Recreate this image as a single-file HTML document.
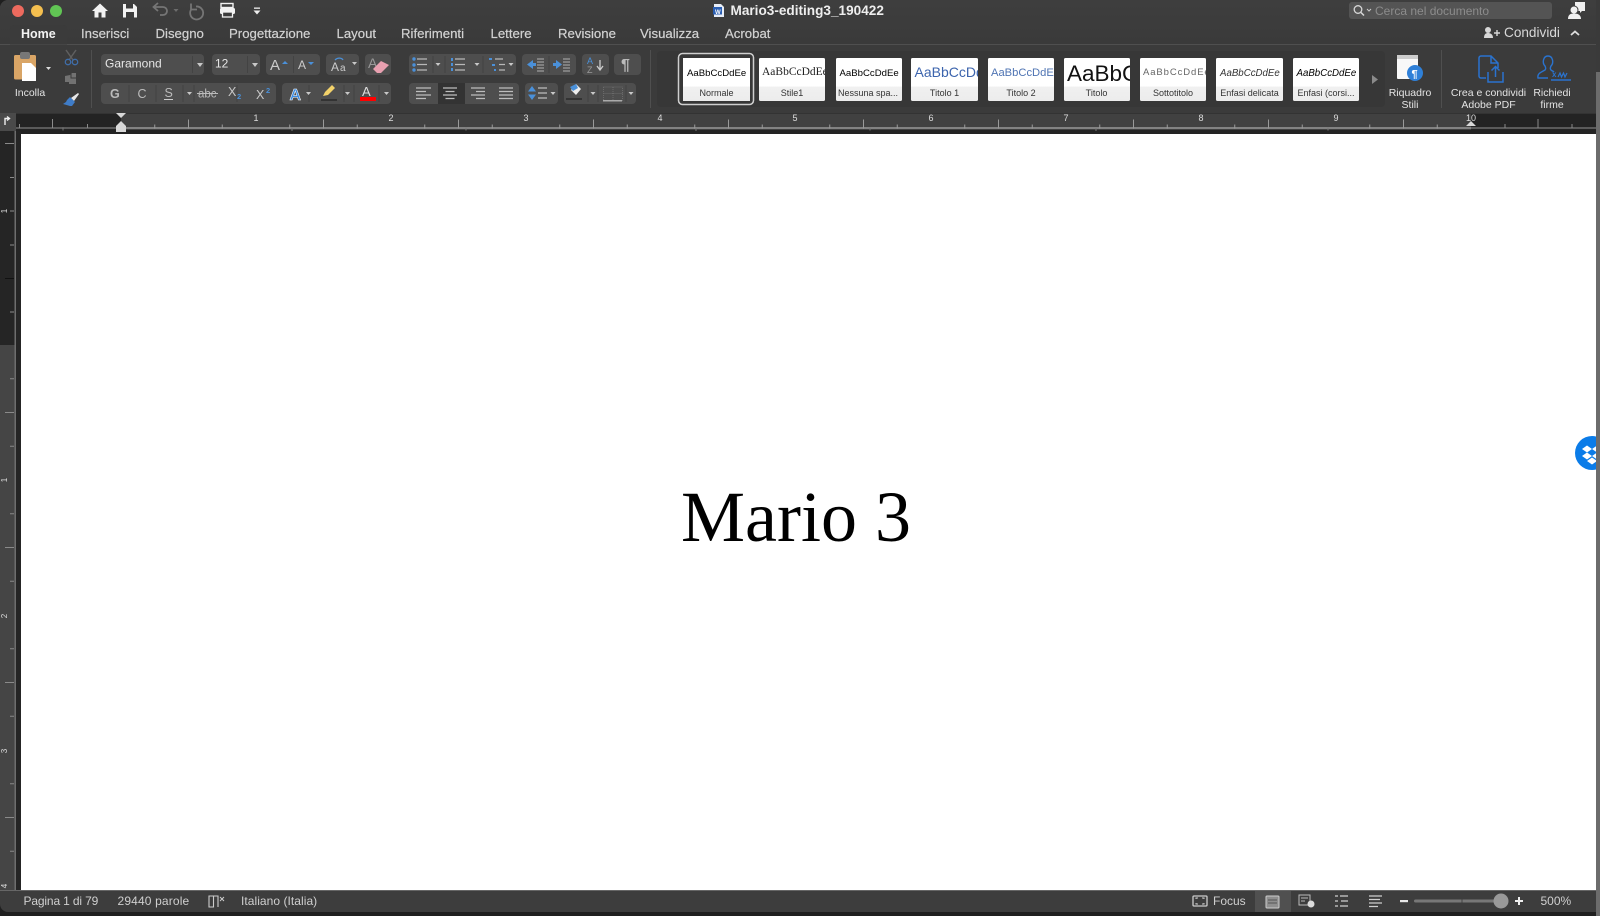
<!DOCTYPE html>
<html><head><meta charset="utf-8"><title>Mario3-editing3_190422</title>
<style>
html,body{margin:0;padding:0;background:#1f1f1f;width:1600px;height:916px;overflow:hidden}
svg{display:block;position:absolute;left:0;top:0}
svg.root{filter:blur(.3px)}
text{font-family:"Liberation Sans",sans-serif;fill:#dedede;font-size:12px}
.tab{font-size:13.2px;fill:#d2d2d2;stroke:#d2d2d2;stroke-width:.2}
.st{font-size:12px;fill:#cfcfcf}
.lb{font-size:9px;fill:#333;text-anchor:middle}
.rb{font-size:10.5px;fill:#e4e4e4;text-anchor:middle}
.n{font-size:9px;fill:#ddd;text-anchor:middle}
</style></head><body>
<svg class="root" width="1600" height="916" viewBox="0 0 1600 916" xmlns="http://www.w3.org/2000/svg">
<defs>
<linearGradient id="tb" x1="0" y1="0" x2="0" y2="1"><stop offset="0" stop-color="#3e3e3e"/><stop offset="1" stop-color="#3a3a3a"/></linearGradient>
<linearGradient id="card" x1="0" y1="0" x2="0" y2="1"><stop offset="0" stop-color="#fff"/><stop offset=".66" stop-color="#fff"/><stop offset=".67" stop-color="#f0f0f0"/><stop offset="1" stop-color="#ececec"/></linearGradient>
<pattern id="rt" x="121" y="113" width="135" height="18" patternUnits="userSpaceOnUse">
<path d="M33.75 11.5v4M67.5 6.5v9M101.25 11.5v4" stroke="#9a9a9a" stroke-width="1" fill="none"/></pattern>
<pattern id="vt" x="0" y="345" width="16" height="135" patternUnits="userSpaceOnUse">
<path d="M10 33.75h4M5 67.5h9M10 101.25h4" stroke="#8a8a8a" stroke-width="1" fill="none"/></pattern>
<clipPath id="win"><path d="M8 0H1596V912H8a8 8 0 0 1-8-8V8a8 8 0 0 1 8-8Z"/></clipPath>
<clipPath id="cl"><rect x="0" y="0" width="1596" height="916"/></clipPath>
</defs>
<rect width="1600" height="916" fill="#1f1f1f"/>
<rect x="1596" width="4" height="916" fill="#6c6c6c"/>
<rect x="1596" width="4" height="72" fill="#3a3a3a"/>
<g clip-path="url(#win)">
<rect width="1600" height="113" fill="#3b3b3b"/>
<rect width="1600" height="44" fill="url(#tb)"/>
<rect y="44" width="1600" height="1" fill="#4f4f4f"/>
<!-- ruler -->
<rect y="113" width="1600" height="21" fill="#232323"/>
<rect x="121" y="113" width="1350" height="17" fill="#414141"/>
<rect x="16" y="113" width="1580" height="1" fill="#333"/>
<rect x="16" y="127" width="1580" height="2" fill="#5a5a5a"/>
<rect x="121" y="127" width="1350" height="2" fill="#828282"/>
<rect x="121" y="113" width="1350" height="18" fill="url(#rt)"/>
<path d="M19.5 124v4M52.5 119v9M87.5 124v4M1505 124v4M1538 119v9M1572 124v4" stroke="#8a8a8a" fill="none"/>
<path d="M292 128v3M696 128v3M1096 128v3" stroke="#777" fill="none"/>
<path d="M63 127.5v3M466 127.5v3M870 127.5v3M1328 127.5v3" stroke="#777" fill="none"/>
<rect x="0" y="113" width="16" height="18" fill="#4a4a4a"/>
<path d="M5 125v-6.500h3.500M7 116.500l2.500 2-2.500 2" stroke="#eee" stroke-width="1.400" fill="none"/>
<text class="n" x="256" y="121">1</text><text class="n" x="391" y="121">2</text><text class="n" x="526" y="121">3</text><text class="n" x="660" y="121">4</text><text class="n" x="795" y="121">5</text><text class="n" x="931" y="121">6</text><text class="n" x="1066" y="121">7</text><text class="n" x="1201" y="121">8</text><text class="n" x="1336" y="121">9</text><text class="n" x="1471" y="121">10</text>
<path d="M116 113h10l-5 5ZM121 121l5 5h-10ZM116 126h10v6h-10ZM1466 126l5-5 5 5Z" fill="#d8d8d8"/>
<!-- vertical ruler -->
<rect x="0" y="131" width="21" height="760" fill="#252525"/>
<rect x="0" y="345" width="15" height="545" fill="#454545"/>
<rect x="14.500" y="131" width="1.500" height="760" fill="#6e6e6e"/>
<path d="M5 143.500h9M10 177.500h4M10 245h4M10 312h4" stroke="#8a8a8a" fill="none"/>
<path d="M10 211h4" stroke="#8a8a8a"/><path d="M5 278.500h9" stroke="#111"/>
<rect x="0" y="345" width="15" height="545" fill="url(#vt)"/>
<g font-size="9"><text class="n" transform="translate(8,211) rotate(-90)" y="-1" style="font-size:8px">1</text>
<text class="n" transform="translate(8,480) rotate(-90)" y="-1" style="font-size:8px">1</text>
<text class="n" transform="translate(8,616) rotate(-90)" y="-1" style="font-size:8px">2</text>
<text class="n" transform="translate(8,751) rotate(-90)" y="-1" style="font-size:8px">3</text>
<text class="n" transform="translate(8,886) rotate(-90)" y="-1" style="font-size:8px">4</text></g>
<!-- page -->
<rect x="21" y="134" width="1575" height="756" fill="#fff"/>
<text x="681" y="541" style="font-family:'Liberation Serif',serif;font-size:72px;fill:#000">Mario 3</text>
<!-- status bar -->
<rect y="890" width="1600" height="22" fill="#3d3d3d"/>
<rect y="890" width="1600" height="1" fill="#666"/>
<rect x="1255" y="891" width="36" height="21" fill="#505050"/>
</g>
<!-- traffic lights -->
<circle cx="18" cy="11" r="6" fill="#ed6a5e"/><circle cx="37" cy="11" r="6" fill="#f4bf4f"/><circle cx="56" cy="11" r="6" fill="#61c554"/>
<!-- quick access -->
<path d="M100 3.500 92 11h2.500v6.500h4v-5h3v5h4V11H108Z" fill="#f2f2f2"/>
<path d="M123 4h11l3 3v10.500h-14Z" fill="#f2f2f2"/><rect x="126" y="4" width="7" height="4.500" fill="#3c3c3c"/><rect x="126" y="12" width="8" height="5.500" fill="#3c3c3c"/>
<path d="M154 7h9a4 4 0 0 1 4 4 4 4 0 0 1-4 4h-3M158 3l-4.500 4 4.500 4" fill="none" stroke="#757575" stroke-width="1.800"/>
<path d="M173.500 9h5l-2.500 3Z" fill="#6c6c6c"/>
<path d="M196 6.500a6.500 6.500 0 1 1-4.500 2.500M191 3.500v6h6" fill="none" stroke="#757575" stroke-width="1.800"/>
<rect x="221" y="3.500" width="12" height="4" fill="none" stroke="#f2f2f2" stroke-width="1.400"/><rect x="220" y="8" width="15" height="6" rx="1.500" fill="#f2f2f2"/><rect x="222.500" y="12" width="10" height="5" fill="#3c3c3c" stroke="#f2f2f2" stroke-width="1.300"/>
<rect x="254" y="7.500" width="6" height="1.300" fill="#eee"/><path d="M253.500 10.500h7l-3.500 4Z" fill="#eee"/>
<!-- title -->
<path d="M714 4h7l3 3v10h-10Z" fill="#e8eef8"/><rect x="713" y="7" width="9" height="7.500" fill="#2b5fb3"/>
<text x="715" y="14" style="font-size:6px;fill:#fff;font-weight:bold">W</text>
<text x="730.500" y="15" style="font-size:13.6px;font-weight:bold;fill:#eee">Mario3-editing3_190422</text>
<!-- search -->
<rect x="1349" y="2" width="203" height="17" rx="3" fill="#545454"/>
<circle cx="1358" cy="9.500" r="3.800" fill="none" stroke="#d8d8d8" stroke-width="1.300"/><path d="M1361 12.500l3 3" stroke="#d8d8d8" stroke-width="1.500"/><path d="M1367 9l2 2 2-2" stroke="#ccc" stroke-width="1" fill="none"/>
<text x="1375" y="15" style="font-size:12px;fill:#8c8c8c">Cerca nel documento</text>
<!-- comments -->
<path d="M1575 2h10v9h-3l-2 2v-2h-5Z" fill="#f0f0f0"/><circle cx="1574" cy="10" r="4" fill="#f0f0f0" stroke="#3c3c3c"/><path d="M1568 19c0-4 2-5.500 6-5.500s7 1.500 7 5.500Z" fill="#f0f0f0"/>
<!-- share -->
<circle cx="1488" cy="30" r="3" fill="#d8d8d8"/><path d="M1484 38c0-4 2-5 4-5s5 1 5 5Z" fill="#d8d8d8"/><path d="M1494 33h6M1497 30v6" stroke="#d8d8d8" stroke-width="1.400"/>
<text x="1504" y="37" style="font-size:13.6px;fill:#d8d8d8">Condividi</text>
<path d="M1571 35l4-3.500 4 3.500" fill="none" stroke="#ddd" stroke-width="1.800"/>
<!-- tabs -->
<path d="M10 44.500V29a4 4 0 0 1 4-4h49a4 4 0 0 1 4 4v15.500Z" fill="#3b3b3b"/>
<text x="21" y="38" style="font-size:12.500px;font-weight:bold;fill:#f2f2f2">Home</text>
<text class="tab" x="81" y="38">Inserisci</text><text class="tab" x="155.500" y="38">Disegno</text><text class="tab" x="229" y="38">Progettazione</text><text class="tab" x="336.500" y="38">Layout</text><text class="tab" x="401" y="38">Riferimenti</text><text class="tab" x="490.500" y="38">Lettere</text><text class="tab" x="558" y="38">Revisione</text><text class="tab" x="640" y="38">Visualizza</text><text class="tab" x="725" y="38">Acrobat</text>
<!-- clipboard -->
<rect x="14" y="55" width="22" height="24.500" rx="1.500" fill="#d9a566"/><rect x="20" y="52" width="10" height="7" rx="2" fill="#777"/><path d="M22 63h9l5 5v13H22Z" fill="#fff"/>
<path d="M46 67h5l-2.500 3Z" fill="#ddd"/>
<text class="rb" x="30" y="96" style="font-size:10.500px">Incolla</text>
<path d="M66 50l7 10M76 50l-7 10" stroke="#5f5f5f" stroke-width="1.500"/><circle cx="68" cy="62" r="2.700" fill="none" stroke="#3f6da8" stroke-width="1.300"/><circle cx="75" cy="62" r="2.700" fill="none" stroke="#3f6da8" stroke-width="1.300"/>
<path d="M65 76l5-1 2-2h4v11h-7v-2h-4Z" fill="#727272"/><path d="M71 73v5h5" stroke="#3b3b3b" fill="none"/>
<path d="M79 94l-1-1-7 5 3 3Z" fill="#e8e8e8"/><path d="M70 97l5 5-3 4h-2l-7-2 3-2 1-2Z" fill="#3f7cc7"/>
<path d="M91.500 50v58M650.500 50v58M1441.500 50v58" stroke="#4f4f4f"/>
<!-- ribbon boxes -->
<g fill="#4e4e4e">
<rect x="101" y="54" width="103" height="21" rx="4"/><rect x="212" y="54" width="48" height="21" rx="4"/><rect x="266" y="54" width="54" height="21" rx="4"/><rect x="326" y="54" width="33" height="21" rx="4"/><rect x="365" y="54" width="26" height="21" rx="4"/>
<rect x="101" y="83" width="175" height="21" rx="4"/><rect x="282" y="83" width="109" height="21" rx="4"/>
<rect x="409" y="54" width="107" height="21" rx="4"/><rect x="522" y="54" width="54" height="21" rx="4"/><rect x="582" y="54" width="27" height="21" rx="4"/><rect x="614" y="54" width="27" height="21" rx="4"/>
<rect x="409" y="83" width="110" height="21" rx="4"/><rect x="525" y="83" width="33" height="21" rx="4"/><rect x="564" y="83" width="72" height="21" rx="4"/>
</g>
<rect x="438" y="83" width="27" height="21" fill="#333"/>
<path d="M192.500 56v17M247.500 56v17M293.500 56v17M129 85v17M156 85v17M183 85v17M194 85v17M237 85v17M309 85v17M344 85v17M354 85v17M379 85v17M433 56v17M445 56v17M483 56v17M549 56v17M588 85v17M598 85v17M626 85v17" stroke="#434343"/>
<text x="105" y="67.500" style="font-size:12px;fill:#e6e6e6">Garamond</text><text x="215" y="67.500" style="font-size:12px;fill:#e6e6e6">12</text>
<g fill="#c8c8c8"><path d="M197 63h6l-3 4ZM252 63h6l-3 4Z"/><path d="M187 92h5l-2.500 3ZM306 92h5l-2.500 3ZM345 92h5l-2.500 3ZM384 92h5l-2.500 3ZM352 62h5l-2.500 3ZM435.500 63h5l-2.500 3ZM474.500 63h5l-2.500 3ZM508.500 63h5l-2.500 3ZM550.500 92h5l-2.500 3ZM590.500 92h5l-2.500 3ZM628.500 92h5l-2.500 3Z"/></g>
<text x="270" y="70" style="font-size:15px;fill:#ccc">A</text><path d="M282 64h6l-3-3Z" fill="#4a90d9"/>
<text x="298" y="69" style="font-size:12px;fill:#ccc">A</text><path d="M308 62h6l-3 3Z" fill="#4a90d9"/>
<text x="331" y="71" style="font-size:12px;fill:#ccc">A</text><text x="340" y="71" style="font-size:10px;fill:#ccc">a</text><path d="M335 60c3-3 7-2 8 0" fill="none" stroke="#4a90d9" stroke-width="1.300"/>
<text x="368" y="68" style="font-size:14px;fill:#999">A</text><path d="M373 69l8-8 8 4-8 8h-4Z" fill="#e8a0b0"/>
<text x="110" y="98" style="font-size:12.500px;font-weight:bold;fill:#bbb">G</text><text x="137.500" y="98" style="font-size:12.500px;fill:#bbb">C</text><text x="164.500" y="97" style="font-size:12.500px;fill:#bbb">S</text><rect x="164" y="99" width="9" height="1" fill="#ccc"/>
<text x="198" y="97.500" style="font-size:11.500px;fill:#bbb">abc</text><rect x="197" y="93" width="21" height="1" fill="#bbb"/>
<text x="228" y="96" style="font-size:12.500px;fill:#c8c8c8">X</text><text x="237" y="99" style="font-size:7.500px;fill:#4a90d9;font-weight:bold">2</text>
<text x="256" y="99" style="font-size:12.500px;fill:#c8c8c8">X</text><text x="266" y="93" style="font-size:7.500px;fill:#4a90d9;font-weight:bold">2</text>
<text x="289.500" y="100" style="font-size:16px;font-weight:bold;fill:#3c8be0;stroke:#fff;stroke-width:.5">A</text>
<path d="M323 96l2-4 7-7 3 3-7 7Z" fill="#f3d26a"/><rect x="321" y="99" width="16" height="2" fill="#333"/>
<text x="362" y="96" style="font-size:13px;fill:#ddd">A</text><rect x="360" y="97" width="16" height="4" fill="#f00"/>
<!-- lists -->
<g fill="#4a90d9"><circle cx="414" cy="59" r="1.700"/><circle cx="414" cy="65" r="1.700"/><circle cx="414" cy="70" r="1.700"/><rect x="451" y="58" width="2" height="3"/><rect x="451" y="63" width="2" height="3"/><rect x="451" y="68" width="2" height="3"/><rect x="489" y="58" width="3" height="2"/><rect x="492" y="64" width="3" height="2"/><rect x="494" y="69" width="2" height="2"/></g>
<path d="M417 59h10M417 64.500h10M417 70h10M455 59h10M455 64.500h10M455 70h10M495 59h8M499 64.500h6M499 70h6" stroke="#b8b8b8" stroke-width="1.200" fill="none"/>
<path d="M527 64.500l6-4.500v3h3v3h-3v3ZM562 64.500l-6-4.500v3h-3v3h3v3Z" fill="#4a90d9"/>
<path d="M537 59h7M537 62h7M537 65h7M537 68h7M537 71h7M563 59h7M563 62h7M563 65h7M563 68h7M563 71h7" stroke="#b0b0b0" stroke-width="1" fill="none"/>
<text x="587" y="64" style="font-size:9px;fill:#4a90d9">A</text><text x="587" y="73" style="font-size:9px;fill:#999">Z</text><path d="M600 60v9M597 66l3 4 3-4" stroke="#ccc" stroke-width="1.300" fill="none"/>
<text x="621" y="70" style="font-size:16px;fill:#bbb;font-weight:bold">¶</text>
<!-- align -->
<path d="M416 88h15M416 91.500h10M416 95h15M416 98.500h10M443 88h14M445.500 91.500h9M443 95h14M445.500 98.500h9M471 88h14M476 91.500h9M471 95h14M476 98.500h9M499 88h14M499 91.500h14M499 95h14M499 98.500h14" stroke="#bdbdbd" stroke-width="1.200" fill="none"/>
<path d="M532 86l4 5.500h-8ZM532 100l4-5.500h-8Z" fill="#4a90d9"/><path d="M538 88h9M538 93h9M538 98h9" stroke="#bdbdbd" stroke-width="1.200"/>
<path d="M576 84l5 5-5 6-5-5Z" fill="#eee"/><path d="M570 87l6-3 2 4-5 3Z" fill="#4a90d9"/><rect x="566" y="98" width="16" height="2" fill="#333"/>
<path d="M603.500 87h19v14M603.500 87v13M613 87v13M603.500 93.500h19" fill="none" stroke="#6a6a6a" stroke-dasharray="1 1"/><rect x="603" y="100" width="19" height="1.500" fill="#aaa"/>
<!-- gallery -->
<rect x="657" y="51" width="728" height="56" rx="4" fill="#373737"/>
<rect x="678.500" y="53.500" width="75" height="51" rx="4" fill="none" stroke="#cfcfcf" stroke-width="1.500"/>
<g fill="url(#card)"><rect x="683" y="58" width="67" height="43"/><rect x="759" y="58" width="66" height="43" rx="1.500"/><rect x="836" y="58" width="66" height="43" rx="1.500"/><rect x="911" y="58" width="67" height="43" rx="1.500"/><rect x="988" y="58" width="66" height="43" rx="1.500"/><rect x="1064" y="58" width="66" height="43" rx="1.500"/><rect x="1140" y="58" width="66" height="43" rx="1.500"/><rect x="1216" y="58" width="67" height="43" rx="1.500"/><rect x="1293" y="58" width="66" height="43" rx="1.500"/></g>
<text class="lb" x="716.500" y="96">Normale</text><text class="lb" x="792" y="96">Stile1</text><text class="lb" x="868" y="96">Nessuna spa...</text><text class="lb" x="944.500" y="96">Titolo 1</text><text class="lb" x="1021" y="96">Titolo 2</text><text class="lb" x="1096.500" y="96">Titolo</text><text class="lb" x="1173" y="96">Sottotitolo</text><text class="lb" x="1249.500" y="96">Enfasi delicata</text><text class="lb" x="1326" y="96">Enfasi (corsi...</text>
<svg x="683" y="58" width="67" height="30" viewBox="0 0 67 30"><text x="4" y="18" style="font-size:9.600px;fill:#000">AaBbCcDdEe</text></svg>
<svg x="759" y="58" width="66" height="30" viewBox="0 0 66 30"><text x="3" y="17" style="font-size:11.500px;font-family:'Liberation Serif',serif;fill:#222">AaBbCcDdEe</text></svg>
<svg x="836" y="58" width="66" height="30" viewBox="0 0 66 30"><text x="3.500" y="18" style="font-size:9.600px;fill:#000">AaBbCcDdEe</text></svg>
<svg x="911" y="58" width="67" height="30" viewBox="0 0 67 30"><text x="3.500" y="19" style="font-size:14px;fill:#3c64ad">AaBbCcDd</text></svg>
<svg x="988" y="58" width="66" height="30" viewBox="0 0 66 30"><text x="3" y="18" style="font-size:11.200px;fill:#4f74b3">AaBbCcDdEe</text></svg>
<svg x="1064" y="58" width="66" height="30" viewBox="0 0 66 30"><text x="3" y="23" style="font-size:22.500px;fill:#111">AaBbCc</text></svg>
<svg x="1140" y="58" width="66" height="30" viewBox="0 0 66 30"><text x="3" y="17" style="font-size:9.500px;letter-spacing:.9px;fill:#666">AaBbCcDdEe</text></svg>
<text x="1220" y="76" style="font-size:9.700px;font-style:italic;fill:#333">AaBbCcDdEe</text>
<text x="1296.500" y="76" style="font-size:9.700px;font-style:italic;fill:#000">AaBbCcDdEe</text>
<path d="M1372 75l6 4.500-6 4.500Z" fill="#8a8a8a"/>
<!-- riquadro stili -->
<rect x="1397" y="55" width="21" height="24" rx="1" fill="#f8f8f8"/><rect x="1397" y="55" width="21" height="4" fill="#ccc"/><circle cx="1415" cy="73" r="8" fill="#2f80d8"/><text x="1411.500" y="77.500" style="font-size:11px;font-weight:bold;fill:#fff">¶</text>
<text class="rb" x="1410" y="96">Riquadro</text><text class="rb" x="1410" y="108">Stili</text>
<path d="M1486 78h-5a2 2 0 0 1-2-2V58a2 2 0 0 1 2-2h10l7 7v5M1491 56v7h7M1495.500 77V67M1491.500 70.500l4-4 4 4M1488 72v10h15V72" fill="none" stroke="#2a73cf" stroke-width="1.500"/>
<text class="rb" x="1488.500" y="96">Crea e condividi</text><text class="rb" x="1488.500" y="108">Adobe PDF</text>
<path d="M1548 78h-10c-1-5 4-6 7-8 1-1 1-2 0-4-3-3-2-10 3-10s6 7 3 10c-1 2-1 3 0 4s2 1 3 2M1551 80h20" fill="none" stroke="#2a73cf" stroke-width="1.400"/>
<text x="1552" y="77" style="font-size:8px;fill:#2a73cf;font-weight:bold">x</text><path d="M1558 77l2-4 1.500 4 2-4 1.500 4 2-4" fill="none" stroke="#2a73cf" stroke-width="1.200"/>
<text class="rb" x="1552" y="96">Richiedi</text><text class="rb" x="1552" y="108">firme</text>
<!-- status -->
<text class="st" x="23.500" y="905" style="letter-spacing:-.15px">Pagina 1 di 79</text><text class="st" x="117.500" y="905" style="letter-spacing:.15px">29440 parole</text><text class="st" x="241" y="905" style="letter-spacing:.05px">Italiano (Italia)</text>
<path d="M209 896h4.500v11H209ZM213.500 896h4.500v11" fill="none" stroke="#ccc" stroke-width="1.100"/><path d="M220 897l4 4M224 897l-4 4" stroke="#ccc"/>
<rect x="1193" y="896" width="14" height="10" rx="1" fill="none" stroke="#ccc" stroke-width="1.300"/>
<path d="M1196 899v-1h2M1204 899v-1h-2M1196 903v1h2M1204 903v1h-2" stroke="#ccc" fill="none"/>
<text class="st" x="1213" y="905">Focus</text>
<rect x="1266" y="896" width="13" height="12" rx="1" fill="#8f8f8f" stroke="#ccc"/><path d="M1268 900h9M1268 903h9" stroke="#555"/>
<rect x="1299" y="895" width="11" height="10" fill="none" stroke="#bbb"/><path d="M1301 898h7M1301 901h4" stroke="#bbb"/><circle cx="1311" cy="904" r="3.500" fill="#ddd"/>
<path d="M1335 896h3M1335 901h3M1335 906h3M1340 896h8M1341 901h7M1340 906h8" stroke="#cfcfcf" stroke-width="1.200" fill="none"/>
<path d="M1369 896h13M1369 899.500h11M1369 903h13M1369 906.500h9" stroke="#cfcfcf" stroke-width="1.300" fill="none"/>
<rect x="1400" y="900" width="8" height="2.200" fill="#e8e8e8"/>
<rect x="1414" y="899.500" width="86" height="3" rx="1.500" fill="#777"/><rect x="1461.500" y="899.500" width="1" height="3" fill="#444"/>
<circle cx="1501" cy="901" r="7.500" fill="#999"/>
<path d="M1515 901h8M1519 897v8" stroke="#eee" stroke-width="2"/>
<text class="st" x="1540.500" y="905">500%</text>
<!-- dropbox -->
<g clip-path="url(#cl)"><circle cx="1592" cy="453" r="17" fill="#0b7ce8"/>
<path d="M1582 449l5-3.500 5 3.500-5 3.500ZM1592 449l5-3.500 5 3.500-5 3.500ZM1582 456l5-3.500 5 3.500-5 3.500ZM1592 456l5-3.500 5 3.500-5 3.500ZM1587 461l5-3.500 5 3.500-5 3.500Z" fill="#fff"/></g>
</svg>
</body></html>
